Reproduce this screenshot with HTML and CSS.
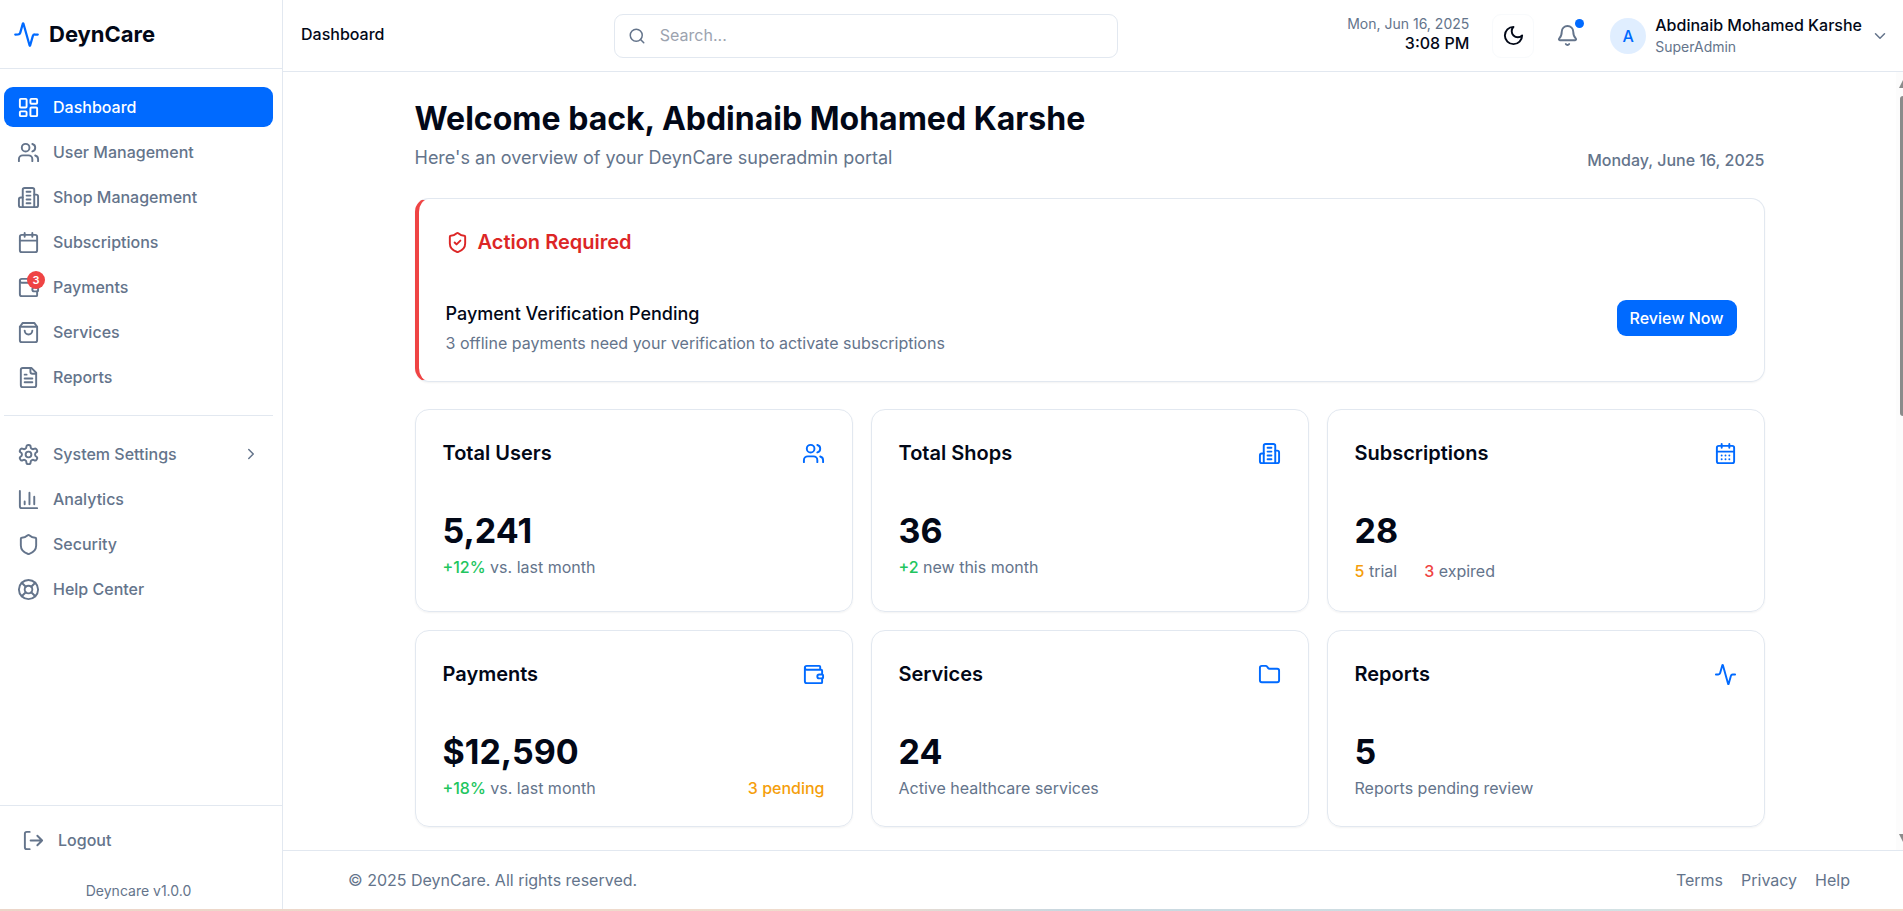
FILE: index.html
```html
<!DOCTYPE html>
<html lang="en">
<head>
  <meta charset="UTF-8">
  <meta name="viewport" content="width=device-width, initial-scale=1">
  <title>DeynCare | Dashboard</title>
  <link rel="stylesheet" href="styles.css">
</head>
<body>
  <!-- Icon set -->
  <svg class="icon-set" aria-hidden="true">
    <symbol id="i-activity" viewBox="0 0 24 24"><path d="M22 12h-2.48a2 2 0 0 0-1.93 1.46l-2.35 8.36a.25.25 0 0 1-.48 0L9.24 2.18a.25.25 0 0 0-.48 0l-2.35 8.36A2 2 0 0 1 4.49 12H2"/></symbol>
    <symbol id="i-dashboard" viewBox="0 0 24 24"><rect width="7" height="9" x="3" y="3" rx="1"/><rect width="7" height="5" x="14" y="3" rx="1"/><rect width="7" height="9" x="14" y="12" rx="1"/><rect width="7" height="5" x="3" y="16" rx="1"/></symbol>
    <symbol id="i-users" viewBox="0 0 24 24"><path d="M16 21v-2a4 4 0 0 0-4-4H6a4 4 0 0 0-4 4v2"/><circle cx="9" cy="7" r="4"/><path d="M22 21v-2a4 4 0 0 0-3-3.87"/><path d="M16 3.13a4 4 0 0 1 0 7.75"/></symbol>
    <symbol id="i-building" viewBox="0 0 24 24"><path d="M6 22V4a2 2 0 0 1 2-2h8a2 2 0 0 1 2 2v18Z"/><path d="M6 12H4a2 2 0 0 0-2 2v6a2 2 0 0 0 2 2h2"/><path d="M18 9h2a2 2 0 0 1 2 2v9a2 2 0 0 1-2 2h-2"/><path d="M10 6h4M10 10h4M10 14h4M10 18h4"/></symbol>
    <symbol id="i-calendar" viewBox="0 0 24 24"><path d="M8 2v4M16 2v4"/><rect width="18" height="18" x="3" y="4" rx="2"/><path d="M3 10h18"/></symbol>
    <symbol id="i-calendar-days" viewBox="0 0 24 24"><path d="M8 2v4M16 2v4"/><rect width="18" height="18" x="3" y="4" rx="2"/><path d="M3 10h18M8 14h.01M12 14h.01M16 14h.01M8 18h.01M12 18h.01M16 18h.01"/></symbol>
    <symbol id="i-wallet" viewBox="0 0 24 24"><path d="M19 7V4a1 1 0 0 0-1-1H5a2 2 0 0 0 0 4h15a1 1 0 0 1 1 1v4h-3a2 2 0 0 0 0 4h3a1 1 0 0 0 1-1v-2a1 1 0 0 0-1-1"/><path d="M3 5v14a2 2 0 0 0 2 2h15a1 1 0 0 0 1-1v-4"/></symbol>
    <symbol id="i-bag" viewBox="0 0 24 24"><path d="M6 2 3 6v14a2 2 0 0 0 2 2h14a2 2 0 0 0 2-2V6l-3-4Z"/><path d="M3 6h18"/><path d="M16 10a4 4 0 0 1-8 0"/></symbol>
    <symbol id="i-file" viewBox="0 0 24 24"><path d="M15 2H6a2 2 0 0 0-2 2v16a2 2 0 0 0 2 2h12a2 2 0 0 0 2-2V7Z"/><path d="M14 2v4a2 2 0 0 0 2 2h4M10 9H8M16 13H8M16 17H8"/></symbol>
    <symbol id="i-settings" viewBox="0 0 24 24"><path d="M12.22 2h-.44a2 2 0 0 0-2 2v.18a2 2 0 0 1-1 1.73l-.43.25a2 2 0 0 1-2 0l-.15-.08a2 2 0 0 0-2.73.73l-.22.38a2 2 0 0 0 .73 2.73l.15.1a2 2 0 0 1 1 1.72v.51a2 2 0 0 1-1 1.74l-.15.09a2 2 0 0 0-.73 2.73l.22.38a2 2 0 0 0 2.73.73l.15-.08a2 2 0 0 1 2 0l.43.25a2 2 0 0 1 1 1.73V20a2 2 0 0 0 2 2h.44a2 2 0 0 0 2-2v-.18a2 2 0 0 1 1-1.73l.43-.25a2 2 0 0 1 2 0l.15.08a2 2 0 0 0 2.73-.73l.22-.39a2 2 0 0 0-.73-2.73l-.15-.08a2 2 0 0 1-1-1.74v-.5a2 2 0 0 1 1-1.74l.15-.09a2 2 0 0 0 .73-2.73l-.22-.38a2 2 0 0 0-2.73-.73l-.15.08a2 2 0 0 1-2 0l-.43-.25a2 2 0 0 1-1-1.73V4a2 2 0 0 0-2-2z"/><circle cx="12" cy="12" r="3"/></symbol>
    <symbol id="i-chart" viewBox="0 0 24 24"><path d="M3 3v16a2 2 0 0 0 2 2h16M18 17V9M13 17V5M8 17v-3"/></symbol>
    <symbol id="i-shield" viewBox="0 0 24 24"><path d="M20 13c0 5-3.5 7.5-7.66 8.95a1 1 0 0 1-.67-.01C7.5 20.5 4 18 4 13V6a1 1 0 0 1 1-1c2 0 4.5-1.2 6.24-2.72a1.17 1.17 0 0 1 1.52 0C14.51 3.81 17 5 19 5a1 1 0 0 1 1 1z"/></symbol>
    <symbol id="i-shield-check" viewBox="0 0 24 24"><path d="M20 13c0 5-3.5 7.5-7.66 8.95a1 1 0 0 1-.67-.01C7.5 20.5 4 18 4 13V6a1 1 0 0 1 1-1c2 0 4.5-1.2 6.24-2.72a1.17 1.17 0 0 1 1.52 0C14.51 3.81 17 5 19 5a1 1 0 0 1 1 1z"/><path d="m9 12 2 2 4-4"/></symbol>
    <symbol id="i-help" viewBox="0 0 24 24"><circle cx="12" cy="12" r="10"/><path d="m4.93 4.93 4.24 4.24M14.83 9.17l4.24-4.24M14.83 14.83l4.24 4.24M9.17 14.83l-4.24 4.24"/><circle cx="12" cy="12" r="4"/></symbol>
    <symbol id="i-logout" viewBox="0 0 24 24"><path d="M8 21H5a2 2 0 0 1-2-2V5a2 2 0 0 1 2-2h3M16 17l5-5-5-5M21 12H9"/></symbol>
    <symbol id="i-search" viewBox="0 0 24 24"><circle cx="11" cy="11" r="8"/><path d="m21 21-4.3-4.3"/></symbol>
    <symbol id="i-moon" viewBox="0 0 24 24"><path d="M12 3a6 6 0 0 0 9 9 9 9 0 1 1-9-9Z"/></symbol>
    <symbol id="i-bell" viewBox="0 0 24 24"><path d="M10.27 21a2 2 0 0 0 3.46 0"/><path d="M3.26 15.33A1 1 0 0 0 4 17h16a1 1 0 0 0 .74-1.67C19.41 13.96 18 12.5 18 8A6 6 0 0 0 6 8c0 4.5-1.41 5.96-2.74 7.33"/></symbol>
    <symbol id="i-folder" viewBox="0 0 24 24"><path d="M20 20a2 2 0 0 0 2-2V8a2 2 0 0 0-2-2h-7.9a2 2 0 0 1-1.69-.9L9.6 3.9A2 2 0 0 0 7.93 3H4a2 2 0 0 0-2 2v13a2 2 0 0 0 2 2Z"/></symbol>
    <symbol id="i-right" viewBox="0 0 24 24"><path d="m9 18 6-6-6-6"/></symbol>
    <symbol id="i-down" viewBox="0 0 24 24"><path d="m6 9 6 6 6-6"/></symbol>
  </svg>

  <div class="app">
    <!-- Sidebar -->
    <aside class="sidebar">
      <a class="brand" href="#"><svg class="icon icon-lg"><use href="#i-activity"/></svg>DeynCare</a>

      <nav class="menu">
        <ul>
          <li><a class="active" href="#"><svg class="icon"><use href="#i-dashboard"/></svg>Dashboard</a></li>
          <li><a href="#"><svg class="icon"><use href="#i-users"/></svg>User Management</a></li>
          <li><a href="#"><svg class="icon"><use href="#i-building"/></svg>Shop Management</a></li>
          <li><a href="#"><svg class="icon"><use href="#i-calendar"/></svg>Subscriptions</a></li>
          <li><a href="#"><span class="icon-wrap"><svg class="icon"><use href="#i-wallet"/></svg><span class="count">3</span></span>Payments</a></li>
          <li><a href="#"><svg class="icon"><use href="#i-bag"/></svg>Services</a></li>
          <li><a href="#"><svg class="icon"><use href="#i-file"/></svg>Reports</a></li>
        </ul>
        <ul>
          <li><a href="#"><svg class="icon"><use href="#i-settings"/></svg>System Settings<svg class="icon icon-sm arrow"><use href="#i-right"/></svg></a></li>
          <li><a href="#"><svg class="icon"><use href="#i-chart"/></svg>Analytics</a></li>
          <li><a href="#"><svg class="icon"><use href="#i-shield"/></svg>Security</a></li>
          <li><a href="#"><svg class="icon"><use href="#i-help"/></svg>Help Center</a></li>
        </ul>
      </nav>

      <div class="sidebar-bottom">
        <button class="logout" type="button"><svg class="icon"><use href="#i-logout"/></svg>Logout</button>
        <p class="version">Deyncare v1.0.0</p>
      </div>
    </aside>

    <div class="page">
      <!-- Top bar -->
      <header class="topbar">
        <div class="crumb">Dashboard</div>
        <label class="search">
          <svg class="icon icon-sm"><use href="#i-search"/></svg>
          <input type="search" placeholder="Search..." aria-label="Search">
        </label>
        <div class="tools">
          <div class="clock">
            <span class="clock-date">Mon, Jun 16, 2025</span>
            <span class="clock-time">3:08 PM</span>
          </div>
          <button class="theme-btn" type="button" aria-label="Toggle theme"><svg class="icon"><use href="#i-moon"/></svg></button>
          <button class="bell-btn" type="button" aria-label="Notifications"><svg class="icon"><use href="#i-bell"/></svg><span class="dot"></span></button>
          <button class="profile" type="button">
            <span class="avatar">A</span>
            <span class="who">
              <span class="who-name">Abdinaib Mohamed Karshe</span>
              <span class="who-role">SuperAdmin</span>
            </span>
            <svg class="icon icon-sm"><use href="#i-down"/></svg>
          </button>
        </div>
      </header>

      <!-- Content -->
      <div class="scroll-area">
        <main class="content">
          <div class="intro">
            <div>
              <h1>Welcome back, Abdinaib Mohamed Karshe</h1>
              <p>Here's an overview of your DeynCare superadmin portal</p>
            </div>
            <span class="today">Monday, June 16, 2025</span>
          </div>

          <section class="card alert">
            <h2><svg class="icon"><use href="#i-shield-check"/></svg>Action Required</h2>
            <div class="alert-body">
              <div>
                <h3>Payment Verification Pending</h3>
                <p>3 offline payments need your verification to activate subscriptions</p>
              </div>
              <button class="review-btn" type="button">Review Now</button>
            </div>
          </section>

          <div class="stats">
            <section class="card">
              <div class="card-head"><h2>Total Users</h2><svg class="icon"><use href="#i-users"/></svg></div>
              <div class="value">5,241</div>
              <div class="note"><span><b class="green">+12%</b> vs. last month</span></div>
            </section>
            <section class="card">
              <div class="card-head"><h2>Total Shops</h2><svg class="icon"><use href="#i-building"/></svg></div>
              <div class="value">36</div>
              <div class="note"><span><b class="green">+2</b> new this month</span></div>
            </section>
            <section class="card">
              <div class="card-head"><h2>Subscriptions</h2><svg class="icon"><use href="#i-calendar-days"/></svg></div>
              <div class="value">28</div>
              <div class="note note-split"><span><b class="amber">5</b> trial</span><span><b class="red">3</b> expired</span></div>
            </section>
            <section class="card">
              <div class="card-head"><h2>Payments</h2><svg class="icon"><use href="#i-wallet"/></svg></div>
              <div class="value">$12,590</div>
              <div class="note"><span><b class="green">+18%</b> vs. last month</span><b class="amber">3 pending</b></div>
            </section>
            <section class="card">
              <div class="card-head"><h2>Services</h2><svg class="icon"><use href="#i-folder"/></svg></div>
              <div class="value">24</div>
              <div class="note">Active healthcare services</div>
            </section>
            <section class="card">
              <div class="card-head"><h2>Reports</h2><svg class="icon"><use href="#i-activity"/></svg></div>
              <div class="value">5</div>
              <div class="note">Reports pending review</div>
            </section>
          </div>
        </main>
        <div class="scrollbar" aria-hidden="true">
          <span class="up"></span>
          <span class="thumb"></span>
          <span class="down"></span>
        </div>
      </div>

      <footer class="footer">
        <span>© 2025 DeynCare. All rights reserved.</span>
        <nav><a href="#">Terms</a><a href="#">Privacy</a><a href="#">Help</a></nav>
      </footer>
    </div>
  </div>
  <div class="edge"></div>
</body>
</html>
```
FILE: styles.css
```css
* {
  box-sizing: border-box;
}

body {
  margin: 0;
  height: 100vh;
  display: flex;
  flex-direction: column;
  overflow: hidden;
  font-family: Inter, "Liberation Sans", sans-serif;
  font-size: 16px;
  line-height: 22px;
  color: #020817;
  background: #fff;
}

h1, h2, h3, p, ul {
  margin: 0;
  padding: 0;
}

ul {
  list-style: none;
}

a {
  color: inherit;
  text-decoration: none;
}

button, input {
  font: inherit;
  color: inherit;
}

button {
  padding: 0;
  border: 0;
  background: none;
  cursor: pointer;
}

/* Icons */
.icon-set {
  display: none;
}

.icon {
  width: 23px;
  height: 23px;
  flex: none;
  display: block;
  fill: none;
  stroke: currentColor;
  stroke-width: 2;
  stroke-linecap: round;
  stroke-linejoin: round;
}

.icon-sm {
  width: 18px;
  height: 18px;
}

.icon-lg {
  width: 27px;
  height: 27px;
}

.app {
  flex: 1;
  min-height: 0;
  display: flex;
}

/* Sidebar */
.sidebar {
  width: 283px;
  flex: none;
  display: flex;
  flex-direction: column;
  border-right: 1px solid #e2e8f0;
}

.brand {
  display: flex;
  align-items: center;
  gap: 9px;
  height: 69px;
  padding: 0 13px;
  border-bottom: 1px solid #e2e8f0;
  font-size: 22px;
  font-weight: 700;
}

.brand .icon {
  color: #006aff;
}

.menu {
  flex: 1;
  padding: 18px 9px 0 4px;
}

.menu ul {
  display: flex;
  flex-direction: column;
  gap: 5px;
}

.menu ul + ul {
  margin-top: 18px;
  padding-top: 18px;
  border-top: 1px solid #e2e8f0;
}

.menu a {
  display: flex;
  align-items: center;
  gap: 13px;
  height: 40px;
  padding: 0 13px;
  border-radius: 9px;
  font-weight: 500;
  color: #64748b;
}

.menu a.active {
  color: #fff;
  background: #006aff;
}

.menu .arrow {
  margin-left: auto;
}

.icon-wrap {
  position: relative;
}

.count {
  position: absolute;
  top: -5px;
  right: -5px;
  width: 18px;
  height: 18px;
  border-radius: 50%;
  font-size: 11px;
  font-weight: 600;
  line-height: 18px;
  text-align: center;
  color: #fff;
  background: #ef4444;
}

.sidebar-bottom {
  padding: 14px 9px 9px;
  border-top: 1px solid #e2e8f0;
  color: #64748b;
}

.logout {
  display: flex;
  align-items: center;
  gap: 13px;
  width: 100%;
  height: 40px;
  padding: 0 13px;
  font-weight: 500;
}

.version {
  padding: 22px 5px 0 0;
  font-size: 14px;
  line-height: 18px;
  text-align: center;
}

/* Top bar */
.page {
  flex: 1;
  min-width: 0;
  display: flex;
  flex-direction: column;
}

.topbar {
  display: flex;
  align-items: center;
  justify-content: space-between;
  height: 72px;
  padding: 0 14px 0 18px;
  border-bottom: 1px solid #e2e8f0;
}

.crumb {
  padding-bottom: 3px;
  font-weight: 500;
}

.search {
  display: flex;
  align-items: center;
  gap: 14px;
  width: 504px;
  height: 44px;
  padding: 0 13px;
  border: 1px solid #e2e8f0;
  border-radius: 9px;
  color: #64748b;
}

.search input {
  flex: 1;
  min-width: 0;
  padding: 0 0 2px;
  border: 0;
  outline: 0;
  background: none;
}

.search input::placeholder {
  color: #9ca3af;
}

.tools {
  display: flex;
  align-items: center;
}

.clock {
  display: flex;
  flex-direction: column;
  padding-bottom: 3px;
  text-align: right;
}

.clock-date {
  font-size: 14px;
  line-height: 18px;
  color: #64748b;
}

.clock-time {
  line-height: 20px;
  font-weight: 500;
}

.theme-btn {
  display: flex;
  align-items: center;
  justify-content: center;
  width: 42px;
  height: 44px;
  margin-left: 23px;
  border: 1px solid #f8fafc;
  border-radius: 9px;
}

.bell-btn {
  position: relative;
  margin: 0 31px 0 22px;
  color: #64748b;
}

.dot {
  position: absolute;
  top: -5px;
  right: -5px;
  width: 9px;
  height: 9px;
  border-radius: 50%;
  background: #006aff;
}

.profile {
  display: flex;
  align-items: center;
  gap: 9px;
  text-align: left;
}

.profile .icon {
  color: #64748b;
}

.avatar {
  width: 36px;
  height: 36px;
  border-radius: 50%;
  font-weight: 500;
  line-height: 36px;
  text-align: center;
  color: #006aff;
  background: #e0eeff;
}

.who {
  display: flex;
  flex-direction: column;
}

.who-name {
  font-weight: 500;
}

.who-role {
  font-size: 14px;
  color: #64748b;
}

/* Content */
.scroll-area {
  flex: 1;
  min-height: 0;
  display: flex;
}

.content {
  flex: 1;
  max-width: 1404px;
  margin: 0 auto;
  padding: 27px 27px 24px;
}

.intro {
  display: flex;
  align-items: flex-end;
  justify-content: space-between;
  margin-bottom: 27px;
}

.intro h1 {
  margin-bottom: 5px;
  font-size: 32px;
  font-weight: 700;
  line-height: 40px;
}

.intro p {
  font-size: 18px;
  line-height: 27px;
  color: #64748b;
}

.today {
  font-weight: 500;
  color: #64748b;
}

.card {
  padding: 27px;
  border: 1px solid #e2e8f0;
  border-radius: 14px;
  box-shadow: 0 1px 2px rgba(0, 0, 0, 0.05);
}

.card h2 {
  font-size: 20px;
  font-weight: 600;
  line-height: 32px;
}

.alert {
  margin-bottom: 27px;
  border-left: 4px solid #ef4444;
}

.alert h2 {
  display: flex;
  align-items: center;
  gap: 9px;
  margin-bottom: 42px;
  color: #dc2626;
}

.alert-body {
  display: flex;
  align-items: flex-start;
  justify-content: space-between;
}

.alert h3 {
  margin-bottom: 5px;
  font-size: 18px;
  font-weight: 500;
  line-height: 27px;
}

.alert p {
  color: #64748b;
}

.review-btn {
  height: 36px;
  padding: 0 13px;
  border-radius: 9px;
  font-weight: 500;
  color: #fff;
  background: #006aff;
}

.stats {
  display: grid;
  grid-template-columns: repeat(3, 1fr);
  gap: 18px;
}

.card-head {
  display: flex;
  align-items: center;
  justify-content: space-between;
  margin-bottom: 42px;
}

.card-head .icon {
  color: #006aff;
}

.value {
  margin-bottom: 5px;
  font-size: 34px;
  font-weight: 700;
  line-height: 40px;
}

.note {
  display: flex;
  justify-content: space-between;
  color: #64748b;
}

.note b {
  font-weight: 500;
}

.note-split {
  justify-content: flex-start;
  gap: 27px;
  padding: 4px 0 2px;
}

.green {
  color: #22c55e;
}

.amber {
  color: #f59e0b;
}

.red {
  color: #ef4444;
}

/* Scrollbar */
.scrollbar {
  width: 7px;
  flex: none;
  display: flex;
  flex-direction: column;
  align-items: flex-end;
  overflow: hidden;
  padding: 8px 0;
  background: #fcfcfc;
}

.up, .down {
  width: 4px;
  height: 8px;
  background: #8b8b8b;
}

.up {
  clip-path: polygon(100% 0, 100% 100%, 0 100%);
}

.down {
  margin-top: auto;
  clip-path: polygon(0 0, 100% 0, 100% 100%);
}

.thumb {
  width: 3px;
  height: 42%;
  margin-top: 8px;
  border-radius: 3px 0 0 3px;
  background: #8b8b8b;
}

/* Footer */
.footer {
  display: flex;
  align-items: center;
  justify-content: space-between;
  height: 59px;
  padding: 0 53px 0 65px;
  border-top: 1px solid #e2e8f0;
  color: #64748b;
}

.footer nav {
  display: flex;
  gap: 18px;
}

.edge {
  height: 2px;
  background: linear-gradient(to right, #ecd5c8 0%, #f0dccd 45%, #c9d8e0 56%, #d3e2e4 86%, #f3dacb 92%, #f3dacb 100%);
}
```
